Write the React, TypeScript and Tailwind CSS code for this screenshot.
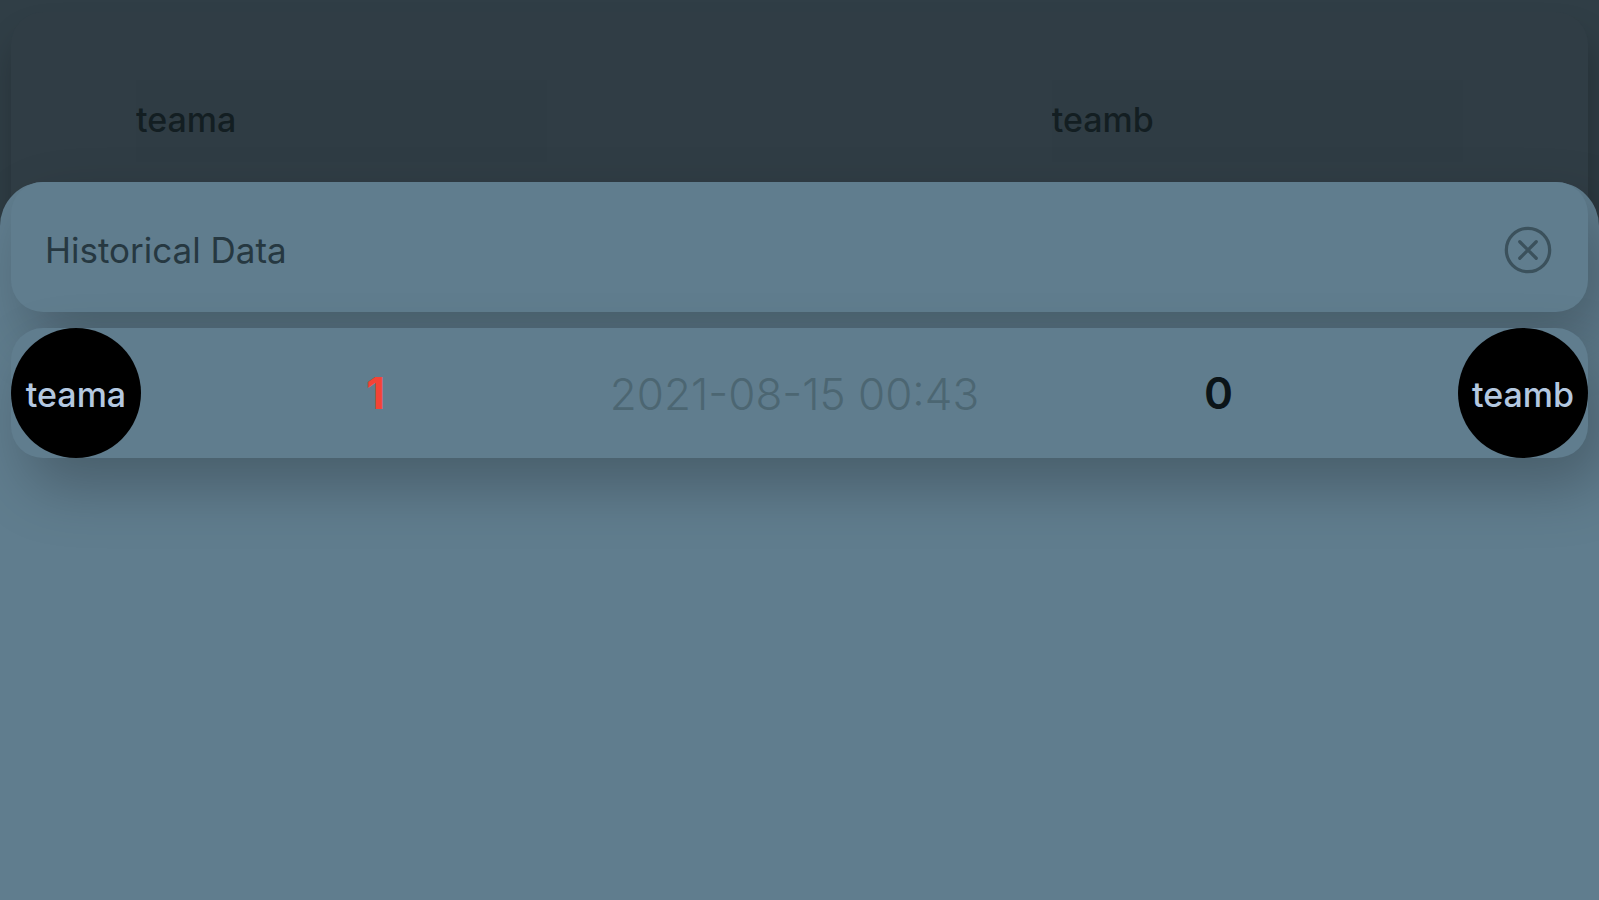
type Match = { home: string; away: string; homeScore: number; awayScore: number; playedAt: string };

const matches: Match[] = [
  { home: "teama", away: "teamb", homeScore: 1, awayScore: 0, playedAt: "2021-08-15 00:43" },
];

function TeamField({ name }: { name: string }) {
  return (
    <input
      aria-label="Team name"
      defaultValue={name}
      className="h-[82px] w-[31%] bg-[#2f3c44] pb-1 text-[34px] font-medium text-[#131e22] outline-none"
    />
  );
}

function TeamBadge({ name }: { name: string }) {
  return (
    <div className="flex size-[130px] shrink-0 items-center justify-center rounded-full bg-black pt-0.5 text-[34px] font-medium text-[#b4c8e0]">
      {name}
    </div>
  );
}

function Score({ value, winner }: { value: number; winner: boolean }) {
  return (
    <span className={winner ? "text-[44px] font-bold text-[#f44336]" : "text-[44px] font-semibold text-[#0b1418]"}>
      {value}
    </span>
  );
}

function CloseIcon() {
  return (
    <svg viewBox="0 0 24 24" className="size-[52px]" fill="none" stroke="currentColor" strokeWidth="1.5" strokeLinecap="round" aria-hidden="true">
      <circle cx="12" cy="12" r="10" />
      <path d="M8.2 8.2l7.6 7.6M15.8 8.2l-7.6 7.6" />
    </svg>
  );
}

function MatchRow({ match }: { match: Match }) {
  return (
    <li className="flex items-center justify-between rounded-[32px] bg-[#607d8e] shadow-[16px_28px_60px_rgba(0,0,0,0.25)]">
      <TeamBadge name={match.home} />
      <Score value={match.homeScore} winner={match.homeScore > match.awayScore} />
      <time className="pt-0.5 text-[44px] font-light text-[#4c6672]">{match.playedAt}</time>
      <Score value={match.awayScore} winner={match.awayScore > match.homeScore} />
      <TeamBadge name={match.away} />
    </li>
  );
}

export default function App() {
  return (
    <div className="flex min-h-screen flex-col overflow-hidden bg-[#303e46] font-['Inter','Liberation_Sans',sans-serif]">
      <main className="px-[11px] pt-3">
        <div className="-mb-10 flex h-[210px] justify-between rounded-t-[32px] bg-[#303d45] px-[125px] pt-[68px] shadow-[4px_24px_32px_rgba(0,0,0,0.25)]">
          <TeamField name="teama" />
          <TeamField name="teamb" />
        </div>
      </main>
      <section
        aria-labelledby="history-title"
        className="relative flex-1 rounded-t-[44px] bg-[#607d8e] px-[11px]"
      >
        <header className="flex h-[130px] items-center justify-between rounded-[32px] bg-[#607d8e] pt-1.5 pr-[34px] pl-[34px] shadow-[16px_28px_60px_rgba(0,0,0,0.25)]">
          <h1 id="history-title" className="text-[35px] text-[#263841]">Historical Data</h1>
          <button type="button" aria-label="Close" className="text-[#3b515c]">
            <CloseIcon />
          </button>
        </header>
        <ul className="mt-4">
          {matches.map((match) => (
            <MatchRow key={match.playedAt} match={match} />
          ))}
        </ul>
      </section>
    </div>
  );
}
